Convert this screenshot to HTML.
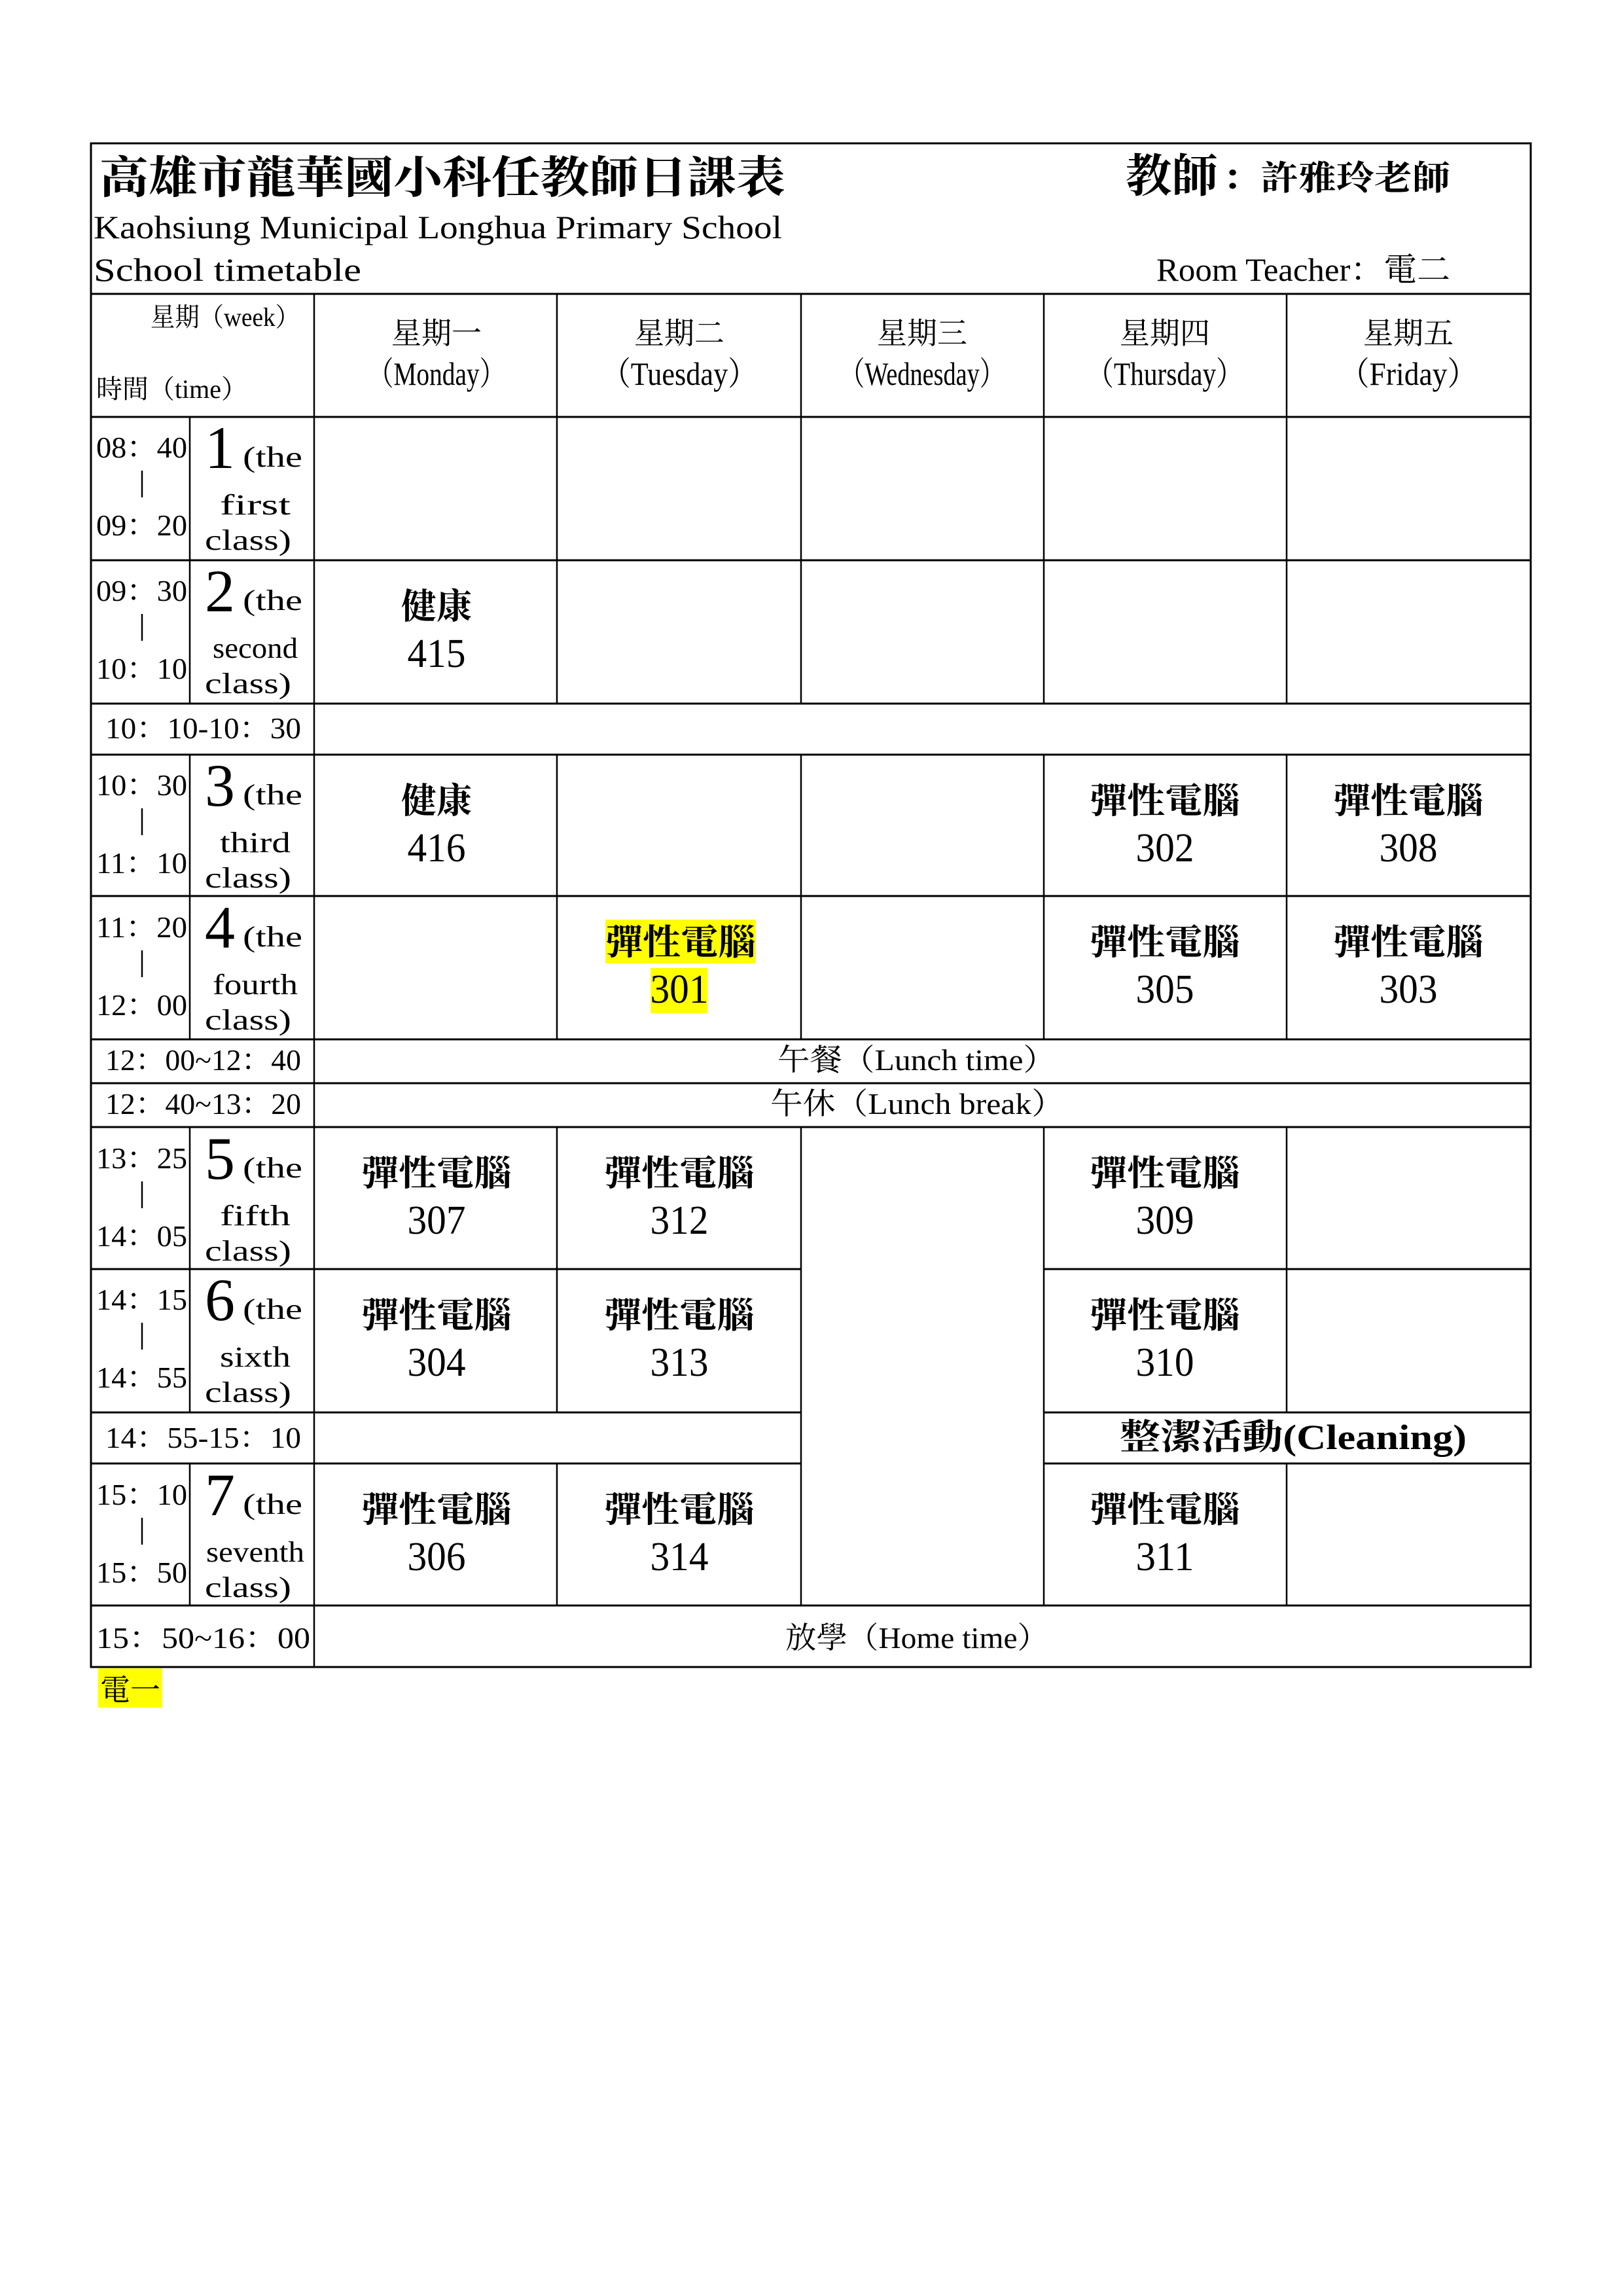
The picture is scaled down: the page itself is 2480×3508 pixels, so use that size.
<!DOCTYPE html>
<html><head><meta charset="utf-8"><style>
html,body{margin:0;padding:0;background:#fff;}
svg{display:block;}
text{font-family:"Liberation Serif","Noto Serif CJK SC",serif;fill:#000;}
.b{font-weight:bold;}
</style></head><body>
<svg width="2480" height="3508" viewBox="0 0 2480 3508" xmlns="http://www.w3.org/2000/svg">
<rect width="2480" height="3508" fill="#fff"/>
<!-- highlights -->
<rect x="925" y="1405" width="230" height="67" fill="#ffff00"/>
<rect x="994" y="1479" width="87" height="69" fill="#ffff00"/>
<rect x="150" y="2549" width="98" height="60" fill="#ffff00"/>
<g stroke="#000" stroke-width="3" fill="none">
<!-- outer -->
<rect x="139" y="219" width="2200" height="2328"/>
<line x1="139" y1="449" x2="2339" y2="449"/>
<line x1="139" y1="637" x2="2339" y2="637"/>
<line x1="139" y1="856" x2="2339" y2="856"/>
<line x1="139" y1="1075" x2="2339" y2="1075"/>
<line x1="139" y1="1153" x2="2339" y2="1153"/>
<line x1="139" y1="1369" x2="2339" y2="1369"/>
<line x1="139" y1="1588" x2="2339" y2="1588"/>
<line x1="139" y1="1655" x2="2339" y2="1655"/>
<line x1="139" y1="1722" x2="2339" y2="1722"/>
<line x1="139" y1="1939" x2="1224" y2="1939"/><line x1="1595" y1="1939" x2="2339" y2="1939"/>
<line x1="139" y1="2158" x2="1224" y2="2158"/><line x1="1595" y1="2158" x2="2339" y2="2158"/>
<line x1="139" y1="2236" x2="1224" y2="2236"/><line x1="1595" y1="2236" x2="2339" y2="2236"/>
<line x1="139" y1="2453" x2="2339" y2="2453"/>
</g>
<g stroke="#000" stroke-width="2.5" fill="none">
<line x1="480" y1="449" x2="480" y2="2547"/>
<line x1="290" y1="637" x2="290" y2="1075"/>
<line x1="290" y1="1153" x2="290" y2="1588"/>
<line x1="290" y1="1722" x2="290" y2="2158"/>
<line x1="290" y1="2236" x2="290" y2="2453"/>
<path d="M851 449V1075M851 1153V1588M851 1722V2158M851 2236V2453"/>
<path d="M1224 449V1075M1224 1153V1588M1224 1722V2453"/>
<path d="M1595 449V1075M1595 1153V1588M1595 1722V2453"/>
<path d="M1966 449V1075M1966 1153V1588M1966 1722V2158M1966 2236V2453"/>
</g>
<!-- header -->
<text x="152" y="295" font-size="68" class="b" textLength="1048" lengthAdjust="spacingAndGlyphs">高雄市龍華國小科任教師日課表</text>
<text x="1720" y="293" font-size="70" class="b" textLength="141" lengthAdjust="spacingAndGlyphs">教師</text>
<text x="1868" y="290" font-size="52" class="b" textLength="348" lengthAdjust="spacingAndGlyphs">：許雅玲老師</text>
<text x="143" y="364" font-size="50" textLength="1052" lengthAdjust="spacingAndGlyphs">Kaohsiung Municipal Longhua Primary School</text>
<text x="143" y="429" font-size="50" textLength="409" lengthAdjust="spacingAndGlyphs">School timetable</text>
<text x="1767" y="429" font-size="50" textLength="449" lengthAdjust="spacingAndGlyphs">Room Teacher：電二</text>
<text x="230" y="498" font-size="40" textLength="228" lengthAdjust="spacingAndGlyphs">星期（week）</text>
<text x="147" y="608" font-size="40" textLength="231" lengthAdjust="spacingAndGlyphs">時間（time）</text>
<g font-size="46" text-anchor="middle">
<text x="667" y="525">星期一</text><text x="1038" y="525">星期二</text><text x="1409" y="525">星期三</text><text x="1780" y="525">星期四</text><text x="2152" y="525">星期五</text>
</g>
<g font-size="50" text-anchor="middle">
<text x="667" y="588" textLength="210" lengthAdjust="spacingAndGlyphs">（Monday）</text>
<text x="1038" y="588" textLength="237" lengthAdjust="spacingAndGlyphs">（Tuesday）</text>
<text x="1409" y="588" textLength="252" lengthAdjust="spacingAndGlyphs">（Wednesday）</text>
<text x="1780" y="588" textLength="239" lengthAdjust="spacingAndGlyphs">（Thursday）</text>
<text x="2152" y="588" textLength="210" lengthAdjust="spacingAndGlyphs">（Friday）</text>
</g>
<!-- period rows -->
<g font-size="46">
<text x="147" y="699" textLength="139" lengthAdjust="spacingAndGlyphs">08：40</text><text x="147" y="818" textLength="139" lengthAdjust="spacingAndGlyphs">09：20</text>
<text x="147" y="918" textLength="139" lengthAdjust="spacingAndGlyphs">09：30</text><text x="147" y="1037" textLength="139" lengthAdjust="spacingAndGlyphs">10：10</text>
<text x="147" y="1215" textLength="139" lengthAdjust="spacingAndGlyphs">10：30</text><text x="147" y="1334" textLength="139" lengthAdjust="spacingAndGlyphs">11：10</text>
<text x="147" y="1432" textLength="139" lengthAdjust="spacingAndGlyphs">11：20</text><text x="147" y="1551" textLength="139" lengthAdjust="spacingAndGlyphs">12：00</text>
<text x="147" y="1785" textLength="139" lengthAdjust="spacingAndGlyphs">13：25</text><text x="147" y="1904" textLength="139" lengthAdjust="spacingAndGlyphs">14：05</text>
<text x="147" y="2001" textLength="139" lengthAdjust="spacingAndGlyphs">14：15</text><text x="147" y="2120" textLength="139" lengthAdjust="spacingAndGlyphs">14：55</text>
<text x="147" y="2299" textLength="139" lengthAdjust="spacingAndGlyphs">15：10</text><text x="147" y="2418" textLength="139" lengthAdjust="spacingAndGlyphs">15：50</text>
</g>
<g stroke="#000" stroke-width="2.5">
<line x1="217" y1="719" x2="217" y2="760"/><line x1="217" y1="938" x2="217" y2="979"/>
<line x1="217" y1="1235" x2="217" y2="1276"/><line x1="217" y1="1452" x2="217" y2="1493"/>
<line x1="217" y1="1805" x2="217" y2="1846"/><line x1="217" y1="2021" x2="217" y2="2062"/>
<line x1="217" y1="2319" x2="217" y2="2360"/>
</g>
<g font-size="92">
<text x="313" y="715">1</text><text x="313" y="934">2</text><text x="313" y="1231">3</text><text x="313" y="1448">4</text>
<text x="313" y="1801">5</text><text x="313" y="2017">6</text><text x="313" y="2315">7</text>
</g>
<g font-size="44">
<text x="371" y="713" textLength="91" lengthAdjust="spacingAndGlyphs">(the</text>
<text x="371" y="932" textLength="91" lengthAdjust="spacingAndGlyphs">(the</text>
<text x="371" y="1229" textLength="91" lengthAdjust="spacingAndGlyphs">(the</text>
<text x="371" y="1446" textLength="91" lengthAdjust="spacingAndGlyphs">(the</text>
<text x="371" y="1799" textLength="91" lengthAdjust="spacingAndGlyphs">(the</text>
<text x="371" y="2015" textLength="91" lengthAdjust="spacingAndGlyphs">(the</text>
<text x="371" y="2313" textLength="91" lengthAdjust="spacingAndGlyphs">(the</text>
</g>
<g font-size="44" text-anchor="middle">
<text x="390" y="786" textLength="108" lengthAdjust="spacingAndGlyphs">first</text>
<text x="390" y="1005" textLength="130" lengthAdjust="spacingAndGlyphs">second</text>
<text x="390" y="1302" textLength="108" lengthAdjust="spacingAndGlyphs">third</text>
<text x="390" y="1519" textLength="130" lengthAdjust="spacingAndGlyphs">fourth</text>
<text x="390" y="1872" textLength="108" lengthAdjust="spacingAndGlyphs">fifth</text>
<text x="390" y="2088" textLength="108" lengthAdjust="spacingAndGlyphs">sixth</text>
<text x="390" y="2386" textLength="150" lengthAdjust="spacingAndGlyphs">seventh</text>
</g>
<g font-size="44">
<text x="313" y="840" textLength="132" lengthAdjust="spacingAndGlyphs">class)</text>
<text x="313" y="1059" textLength="132" lengthAdjust="spacingAndGlyphs">class)</text>
<text x="313" y="1356" textLength="132" lengthAdjust="spacingAndGlyphs">class)</text>
<text x="313" y="1573" textLength="132" lengthAdjust="spacingAndGlyphs">class)</text>
<text x="313" y="1926" textLength="132" lengthAdjust="spacingAndGlyphs">class)</text>
<text x="313" y="2142" textLength="132" lengthAdjust="spacingAndGlyphs">class)</text>
<text x="313" y="2440" textLength="132" lengthAdjust="spacingAndGlyphs">class)</text>
</g>
<!-- cells -->
<g font-size="54" class="b" text-anchor="middle">
<text x="667" y="945">健康</text>
<text x="667" y="1242">健康</text>
<text x="1780" y="1242" textLength="230" lengthAdjust="spacingAndGlyphs">彈性電腦</text>
<text x="2152" y="1242" textLength="230" lengthAdjust="spacingAndGlyphs">彈性電腦</text>
<text x="1040" y="1458" textLength="230" lengthAdjust="spacingAndGlyphs">彈性電腦</text>
<text x="1780" y="1458" textLength="230" lengthAdjust="spacingAndGlyphs">彈性電腦</text>
<text x="2152" y="1458" textLength="230" lengthAdjust="spacingAndGlyphs">彈性電腦</text>
<text x="667" y="1811" textLength="230" lengthAdjust="spacingAndGlyphs">彈性電腦</text>
<text x="1038" y="1811" textLength="230" lengthAdjust="spacingAndGlyphs">彈性電腦</text>
<text x="1780" y="1811" textLength="230" lengthAdjust="spacingAndGlyphs">彈性電腦</text>
<text x="667" y="2028" textLength="230" lengthAdjust="spacingAndGlyphs">彈性電腦</text>
<text x="1038" y="2028" textLength="230" lengthAdjust="spacingAndGlyphs">彈性電腦</text>
<text x="1780" y="2028" textLength="230" lengthAdjust="spacingAndGlyphs">彈性電腦</text>
<text x="667" y="2325" textLength="230" lengthAdjust="spacingAndGlyphs">彈性電腦</text>
<text x="1038" y="2325" textLength="230" lengthAdjust="spacingAndGlyphs">彈性電腦</text>
<text x="1780" y="2325" textLength="230" lengthAdjust="spacingAndGlyphs">彈性電腦</text>
</g>
<g font-size="62" text-anchor="middle">
<text x="667" y="1019" textLength="89" lengthAdjust="spacingAndGlyphs">415</text>
<text x="667" y="1316" textLength="89" lengthAdjust="spacingAndGlyphs">416</text>
<text x="1780" y="1316" textLength="89" lengthAdjust="spacingAndGlyphs">302</text>
<text x="2152" y="1316" textLength="89" lengthAdjust="spacingAndGlyphs">308</text>
<text x="1038" y="1532" textLength="89" lengthAdjust="spacingAndGlyphs">301</text>
<text x="1780" y="1532" textLength="89" lengthAdjust="spacingAndGlyphs">305</text>
<text x="2152" y="1532" textLength="89" lengthAdjust="spacingAndGlyphs">303</text>
<text x="667" y="1885" textLength="89" lengthAdjust="spacingAndGlyphs">307</text>
<text x="1038" y="1885" textLength="89" lengthAdjust="spacingAndGlyphs">312</text>
<text x="1780" y="1885" textLength="89" lengthAdjust="spacingAndGlyphs">309</text>
<text x="667" y="2102" textLength="89" lengthAdjust="spacingAndGlyphs">304</text>
<text x="1038" y="2102" textLength="89" lengthAdjust="spacingAndGlyphs">313</text>
<text x="1780" y="2102" textLength="89" lengthAdjust="spacingAndGlyphs">310</text>
<text x="667" y="2399" textLength="89" lengthAdjust="spacingAndGlyphs">306</text>
<text x="1038" y="2399" textLength="89" lengthAdjust="spacingAndGlyphs">314</text>
<text x="1780" y="2399" textLength="89" lengthAdjust="spacingAndGlyphs">311</text>
</g>
<!-- break rows -->
<g font-size="46">
<text x="161" y="1128" textLength="299" lengthAdjust="spacingAndGlyphs">10：10-10：30</text>
<text x="161" y="1635" textLength="299" lengthAdjust="spacingAndGlyphs">12：00~12：40</text>
<text x="161" y="1702" textLength="299" lengthAdjust="spacingAndGlyphs">12：40~13：20</text>
<text x="161" y="2212" textLength="299" lengthAdjust="spacingAndGlyphs">14：55-15：10</text>
<text x="147" y="2518" textLength="327" lengthAdjust="spacingAndGlyphs">15：50~16：00</text>
<text x="1188" y="1635" textLength="425" lengthAdjust="spacingAndGlyphs">午餐（Lunch time）</text>
<text x="1177" y="1702" textLength="449" lengthAdjust="spacingAndGlyphs">午休（Lunch break）</text>
<text x="1200" y="2518" textLength="402" lengthAdjust="spacingAndGlyphs">放學（Home time）</text>
</g>
<text x="1711" y="2214" font-size="54" class="b" textLength="530" lengthAdjust="spacingAndGlyphs">整潔活動(Cleaning)</text>
<text x="153" y="2598" font-size="46" textLength="92" lengthAdjust="spacingAndGlyphs">電一</text>
</svg>
</body></html>
